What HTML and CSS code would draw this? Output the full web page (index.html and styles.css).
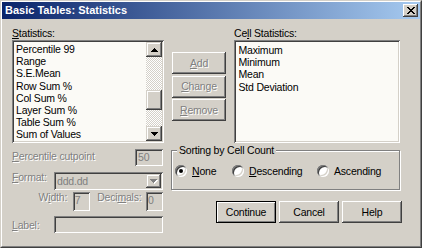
FILE: index.html
```html
<!DOCTYPE html>
<html>
<head>
<meta charset="utf-8">
<title>Basic Tables: Statistics</title>
<link rel="stylesheet" href="styles.css">
</head>
<body>
<div class="window">
  <div class="frame">
    <div class="titlebar">
      <span class="title">Basic Tables: Statistics</span>
      <button class="close" aria-label="Close">
        <svg width="8" height="7" viewBox="0 0 8 7" shape-rendering="crispEdges"><path fill="#000" d="M0 0h2v1h-2zM6 0h2v1h-2zM1 1h2v1h-2zM5 1h2v1h-2zM2 2h4v1h-4zM3 3h2v1h-2zM2 4h4v1h-4zM1 5h2v1h-2zM5 5h2v1h-2zM0 6h2v1h-2zM6 6h2v1h-2z"/></svg>
      </button>
    </div>
    <div class="content">
      <div class="leftcol">
        <div class="lbl"><u>S</u>tatistics:</div>
        <div class="listbox stats">
          <ul class="items">
            <li>Percentile 99</li>
            <li>Range</li>
            <li>S.E.Mean</li>
            <li>Row Sum %</li>
            <li>Col Sum %</li>
            <li>Layer Sum %</li>
            <li>Table Sum %</li>
            <li>Sum of Values</li>
          </ul>
          <div class="vscroll">
            <div class="sbtn"><svg width="7" height="4" viewBox="0 0 7 4" shape-rendering="crispEdges"><path fill="#000" d="M3 0h1v1h1v1h1v1h1v1H0V3h1V2h1V1h1z"/></svg></div>
            <div class="track t1"></div>
            <div class="thumb"></div>
            <div class="track t2"></div>
            <div class="sbtn"><svg width="7" height="4" viewBox="0 0 7 4" shape-rendering="crispEdges"><path fill="#000" d="M0 0h7v1H6v1H5v1H4v1H3V3H2V2H1V1H0z"/></svg></div>
          </div>
        </div>
        <div class="row pct">
          <span class="lbl dis"><u>P</u>ercentile cutpoint</span>
          <span class="field">50</span>
        </div>
        <div class="row fmt">
          <span class="lbl dis"><u>F</u>ormat:</span>
          <div class="combo">
            <span class="combo-text">ddd.dd</span>
            <span class="combo-btn"><svg width="8" height="5" viewBox="0 0 8 5" shape-rendering="crispEdges"><path fill="#fff" d="M1 1h7v1H7v1H6v1H5v1H4V4H3V3H2V2H1z"/><path fill="#808080" d="M0 0h7v1H6v1H5v1H4v1H3V3H2V2H1V1H0z"/></svg></span>
          </div>
        </div>
        <div class="row wd">
          <span class="lbl dis">W<u>i</u>dth:</span>
          <span class="field small">7</span>
          <span class="lbl dis dec">Deci<u>m</u>als:</span>
          <span class="field small">0</span>
        </div>
        <div class="row lab">
          <span class="lbl dis"><u>L</u>abel:</span>
          <span class="field wide"></span>
        </div>
      </div>
      <div class="rightcol">
        <div class="toprow">
          <div class="btncol">
            <button class="btn dis"><u>A</u>dd</button>
            <button class="btn dis"><u>C</u>hange</button>
            <button class="btn dis"><u>R</u>emove</button>
          </div>
          <div class="cellcol">
            <div class="lbl">Ce<u>l</u>l Statistics:</div>
            <div class="listbox cell">
              <ul class="items">
                <li>Maximum</li>
                <li>Minimum</li>
                <li>Mean</li>
                <li>Std Deviation</li>
              </ul>
            </div>
          </div>
        </div>
        <div class="group">
          <div class="legend">Sorting by Cell Count</div>
          <div class="radios">
            <label class="opt"><span class="radio on"></span><span><u>N</u>one</span></label>
            <label class="opt"><span class="radio"></span><span><u>D</u>escending</span></label>
            <label class="opt"><span class="radio"></span><span>Ascending</span></label>
          </div>
        </div>
        <div class="actions">
          <button class="btn big default">Continue</button>
          <button class="btn big">Cancel</button>
          <button class="btn big">Help</button>
        </div>
      </div>
    </div>
  </div>
</div>
</body>
</html>
```

FILE: styles.css
```css
* { box-sizing: border-box; }
html, body { margin: 0; padding: 0; }
body {
  width: 422px;
  height: 248px;
  overflow: hidden;
  background: #d4d0c8;
  font-family: "Liberation Sans", Arial, sans-serif;
  font-size: 10.5px;
  letter-spacing: -0.2px;
  line-height: 13px;
  color: #000;
}
.window {
  width: 422px;
  height: 248px;
  border: 1px solid;
  border-color: #d4d0c8 #404040 #404040 #d4d0c8;
  background: #d4d0c8;
}
.frame {
  height: 100%;
  border: 1px solid;
  border-color: #fff #808080 #808080 #fff;
}
.titlebar {
  height: 17px;
  display: flex;
  align-items: center;
  justify-content: space-between;
  padding: 0 2px 0 3px;
  background: linear-gradient(to right, #0a246a, #a6caf0);
}
.title {
  color: #fff;
  font-weight: bold;
  font-size: 11px;
  letter-spacing: 0;
  line-height: 17px;
  white-space: nowrap;
}
.close {
  width: 15px;
  height: 13px;
  padding: 0;
  border: 0;
  background: #d4d0c8;
  display: flex;
  align-items: center;
  justify-content: center;
  box-shadow: inset -1px -1px #404040, inset 1px 1px #fff, inset -2px -2px #808080;
}
.close svg { display: block; }

.content {
  display: flex;
  gap: 7px;
  padding: 8px 0 0 10px;
}
.leftcol { width: 152px; flex: none; }
.rightcol { width: 231px; flex: none; }

.lbl { white-space: nowrap; line-height: 13px; }
.dis { color: #808080; text-shadow: 1px 1px 0 #fff; }

.listbox {
  display: flex;
  height: 103px;
  padding: 2px;
  background: #fbfaf6;
  box-shadow: inset 1px 1px #808080, inset -1px -1px #fff, inset 2px 2px #404040, inset -2px -2px #d4d0c8;
}
.items {
  flex: 1;
  margin: 0;
  padding: 1px 0 0 2px;
  list-style: none;
  overflow: hidden;
}
.cell .items { padding-top: 2px; padding-left: 2.5px; }
.items li { line-height: 12.2px; white-space: nowrap; }

.vscroll { width: 16px; flex: none; display: flex; flex-direction: column; }
.sbtn, .thumb {
  background: #d4d0c8;
  box-shadow: inset -1px -1px #404040, inset 1px 1px #d4d0c8, inset -2px -2px #808080, inset 2px 2px #fff;
}
.sbtn { height: 15px; flex: none; display: flex; align-items: center; justify-content: center; }
.sbtn svg { display: block; }
.track { background: repeating-conic-gradient(#d4d0c8 0 25%, #fff 0 50%) 0 0 / 2px 2px; }
.t1 { height: 33px; flex: none; }
.thumb { height: 20px; flex: none; }
.t2 { flex: 1; }

.row { display: flex; align-items: flex-start; padding-right: 1px; }
.field {
  display: block;
  padding: 2px 0 0 3px;
  background: #d4d0c8;
  color: #808080;
  box-shadow: inset 1px 1px #808080, inset -1px -1px #fff, inset 2px 2px #404040, inset -2px -2px #d4d0c8;
}
.pct { margin-top: 6px; height: 17px; justify-content: space-between; }
.pct .lbl { margin-top: 1px; }
.pct .field { width: 28px; height: 17px; }
.fmt { margin-top: 6px; height: 18px; justify-content: space-between; }
.fmt .lbl { margin-top: -1px; }
.combo {
  width: 109px;
  height: 18px;
  display: flex;
  padding: 2px;
  background: #d4d0c8;
  box-shadow: inset 1px 1px #808080, inset -1px -1px #fff, inset 2px 2px #404040, inset -2px -2px #d4d0c8;
}
.combo-text { flex: 1; padding-left: 1px; line-height: 14px; color: #808080; }
.combo-btn {
  width: 15px;
  flex: none;
  display: flex;
  align-items: center;
  justify-content: center;
  background: #d4d0c8;
  box-shadow: inset -1px -1px #404040, inset 1px 1px #d4d0c8, inset -2px -2px #808080, inset 2px 2px #fff;
}
.combo-btn svg { display: block; }
.wd { margin-top: 2px; height: 19px; justify-content: flex-end; }
.wd .lbl { margin-top: -1px; margin-right: 5.5px; }
.wd .dec { margin-left: 7.5px; margin-right: 4.5px; }
.field.small { width: 17px; height: 19px; padding-left: 2px; }
.lab { margin-top: 5px; height: 17px; justify-content: space-between; }
.lab .lbl { margin-top: 2.5px; }
.field.wide { width: 109px; height: 17px; }

.toprow { display: flex; align-items: flex-start; }
.btncol {
  width: 54px;
  margin: 25px 0 0 1px;
  display: flex;
  flex-direction: column;
  gap: 1.5px;
}
.btn {
  font: inherit;
  letter-spacing: inherit;
  color: #000;
  height: 22px;
  padding: 0;
  border: 0;
  background: #d4d0c8;
  box-shadow: inset -1px -1px #404040, inset 1px 1px #fff, inset -2px -2px #808080;
  white-space: nowrap;
}
.btn.dis { color: #808080; text-shadow: 1px 1px 0 #fff; }
.cellcol { width: 166px; margin-left: 8px; }

.group {
  margin: 7px 2px 0 0;
  padding: 0 0 11px 3px;
  border: 1px solid #808080;
  box-shadow: inset 1px 1px #fff, 1px 1px #fff;
}
.legend {
  display: table;
  margin: -7px 0 0 2px;
  padding: 0 2px;
  background: #d4d0c8;
  white-space: nowrap;
}
.radios {
  margin-top: 7px;
  height: 14px;
  display: grid;
  grid-template-columns: 57px 85px auto;
  align-items: center;
}
.opt { display: flex; align-items: center; gap: 5px; white-space: nowrap; }
.radio {
  width: 12px;
  height: 12px;
  flex: none;
  border-radius: 50%;
  background: #fff;
  display: flex;
  align-items: center;
  justify-content: center;
  box-shadow: inset 1px 1px #808080, inset -1px -1px #fff, inset 2px 2px #404040, inset -2px -2px #d4d0c8;
}
.radio.on::after {
  content: "";
  width: 4px;
  height: 4px;
  border-radius: 50%;
  background: #000;
}

.actions {
  display: flex;
  justify-content: flex-end;
  gap: 3px;
  margin-top: 11px;
}
.btn.big { width: 60px; }
.btn.default {
  border: 1px solid #000;
  box-shadow: inset 1px 1px #fff, inset -1px -1px #808080;
}
```
